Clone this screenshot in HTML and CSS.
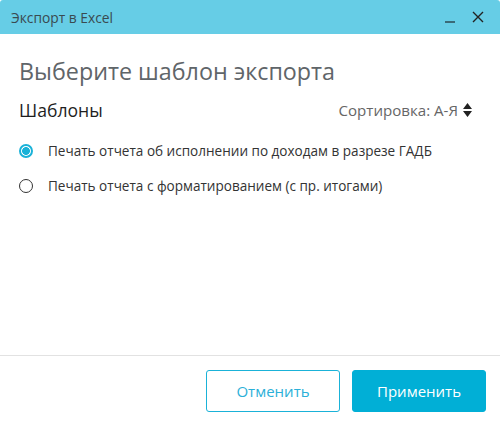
FILE: index.html
```html
<!DOCTYPE html>
<html lang="ru">
<head>
<meta charset="utf-8">
<link rel="stylesheet" href="styles.css">
</head>
<body>
<div class="window">
  <div class="titlebar">
    <span class="title">Экспорт в Excel</span>
    <div class="controls">
      <span class="min"></span>
      <svg class="close" width="12" height="12" viewBox="0 0 12 12"><path d="M1 1L11 11M11 1L1 11" stroke="#222" stroke-width="1.4"/></svg>
    </div>
  </div>
  <div class="content">
    <h1 class="heading">Выберите шаблон экспорта</h1>
    <div class="section-head">
      <span class="section-title">Шаблоны</span>
      <span class="sort">Сортировка: А-Я
        <svg class="sort-icon" width="9" height="16" viewBox="0 0 9 16"><path d="M4.5 1L9 7H0Z M4.5 15L0 9H9Z" fill="#222"/></svg>
      </span>
    </div>
    <ul class="list">
      <li class="item"><span class="radio checked"></span>Печать отчета об исполнении по доходам в разрезе ГАДБ</li>
      <li class="item"><span class="radio"></span>Печать отчета с форматированием (с пр. итогами)</li>
    </ul>
  </div>
  <div class="footer">
    <button class="btn btn-cancel">Отменить</button>
    <button class="btn btn-apply">Применить</button>
  </div>
</div>
</body>
</html>
```
FILE: styles.css
```css
html, body {
  margin: 0;
  padding: 0;
  background: #fff;
}
body {
  font-family: "Open Sans", "Noto Sans", sans-serif;
}
.window {
  width: 500px;
  height: 429px;
  display: flex;
  flex-direction: column;
  background: #fff;
  border-radius: 3px 3px 0 0;
  overflow: hidden;
}
.titlebar {
  height: 34px;
  flex: none;
  background: #66cde6;
  display: flex;
  align-items: center;
  justify-content: space-between;
  padding: 0 16px 0 11px;
}
.title {
  font-size: 13.8px;
  color: #3a4a50;
}
.controls {
  display: flex;
  align-items: center;
  gap: 17px;
}
.min {
  width: 10px;
  height: 2px;
  background: #3a6a78;
  margin-top: 9px;
}
.close {
  display: block;
  margin-top: -1px;
}
.content {
  flex: 1;
  padding: 0 19px;
}
.heading {
  margin: 22px 0 0;
  font-size: 23.3px;
  font-weight: 400;
  color: #5f6569;
  line-height: 30px;
}
.section-head {
  display: flex;
  justify-content: space-between;
  align-items: center;
  margin-top: 12px;
  height: 24px;
}
.section-title {
  font-size: 17.6px;
  color: #1e1e1e;
}
.sort {
  display: flex;
  align-items: center;
  gap: 5px;
  font-size: 15.1px;
  color: #666;
  margin-right: 9px;
}
.sort-icon {
  display: block;
}
.list {
  list-style: none;
  margin: 11px 0 0;
  padding: 0;
}
.item {
  display: flex;
  align-items: center;
  height: 35px;
  font-size: 13.56px;
  color: #333;
}
.radio {
  width: 14px;
  height: 14px;
  box-sizing: border-box;
  border: 1.5px solid #333;
  border-radius: 50%;
  margin-right: 15px;
  flex: none;
}
.radio.checked {
  border: 2px solid #1ab2d8;
  background: radial-gradient(circle, #1ab2d8 0 3.6px, #fff 4.2px);
}
.footer {
  height: 74px;
  flex: none;
  border-top: 1px solid #e2e2e2;
  display: flex;
  justify-content: flex-end;
  align-items: flex-start;
  gap: 12px;
  padding: 14px 14px 0 0;
  box-sizing: border-box;
}
.btn {
  width: 134px;
  height: 42px;
  border-radius: 3px;
  font-family: "Open Sans", "Noto Sans", sans-serif;
  font-size: 15px;
  cursor: pointer;
}
.btn-cancel {
  background: #fff;
  border: 1px solid #1ab2d8;
  color: #2bb0d8;
}
.btn-apply {
  background: #01afd6;
  border: 1px solid #01afd6;
  color: #fff;
}
```
